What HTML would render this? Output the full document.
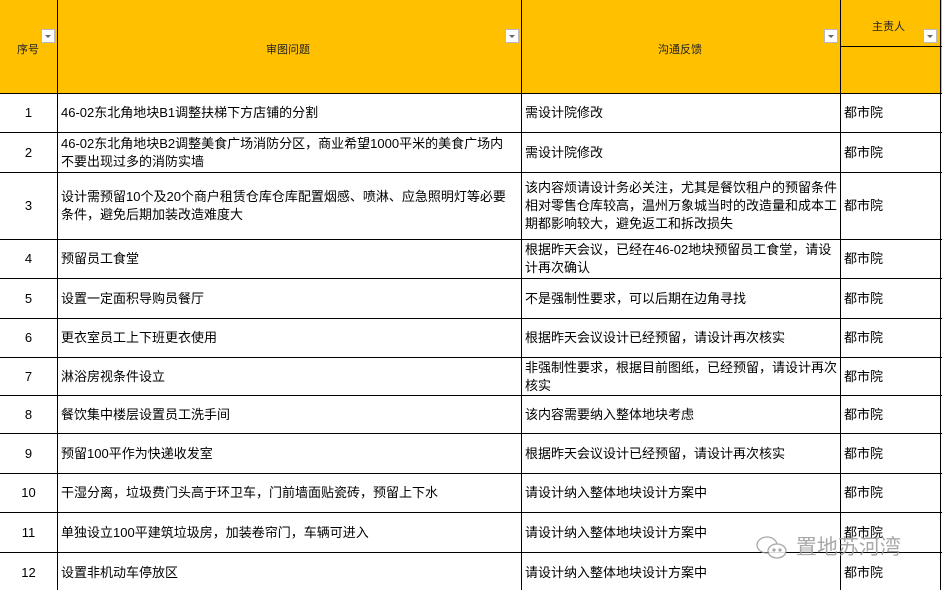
<!DOCTYPE html>
<html><head><meta charset="utf-8"><style>
body{margin:0;width:942px;height:590px;overflow:hidden;background:#fff;font-family:"Liberation Sans","Noto Sans CJK SC",sans-serif;color:#000}
.hd{position:absolute;top:0;height:93px;background:#ffc000}
.c{position:absolute;display:flex;align-items:center;font-size:13px;line-height:18px;box-sizing:border-box;padding-left:3px}
.vl{position:absolute;width:1px;background:#000;top:0;height:590px}
.hl{position:absolute;height:1px;background:#000;left:0;width:942px}
.dd{position:absolute;width:14px;height:14px;background:#fff;border:1px solid #bbb;box-sizing:border-box}
.dd:after{content:"";position:absolute;left:3px;top:5px;border-left:3px solid transparent;border-right:3px solid transparent;border-top:3px solid #666}
.h{position:absolute;font-size:11px;color:#222}
</style></head><body>
<div class="hd" style="left:0;width:942px"></div>
<div class="h" style="left:17px;top:41px">序号</div>
<div class="h" style="left:266px;top:41px">审图问题</div>
<div class="h" style="left:658px;top:41px">沟通反馈</div>
<div class="h" style="left:872px;top:18px">主责人</div>
<div class="dd" style="left:41px;top:29px"></div>
<div class="dd" style="left:505px;top:29px"></div>
<div class="dd" style="left:824px;top:29px"></div>
<div class="dd" style="left:923px;top:29px"></div>
<div class="hl" style="left:840px;width:102px;top:46px"></div>
<div class="vl" style="left:57px"></div>
<div class="vl" style="left:521px"></div>
<div class="vl" style="left:840px"></div>
<div class="vl" style="left:940px"></div>
<div class="hl" style="top:93px"></div><div class="hl" style="top:132px"></div><div class="hl" style="top:172px"></div><div class="hl" style="top:239px"></div><div class="hl" style="top:278px"></div><div class="hl" style="top:318px"></div><div class="hl" style="top:357px"></div><div class="hl" style="top:395px"></div><div class="hl" style="top:433px"></div><div class="hl" style="top:473px"></div><div class="hl" style="top:512px"></div><div class="hl" style="top:552px"></div>

<div id="rows"></div>
<script>
var R=[[93,132,"1","46-02东北角地块B1调整扶梯下方店铺的分割","需设计院修改"],
[132,172,"2","46-02东北角地块B2调整美食广场消防分区，商业希望1000平米的美食广场内不要出现过多的消防实墙","需设计院修改"],
[172,239,"3","设计需预留10个及20个商户租赁仓库仓库配置烟感、喷淋、应急照明灯等必要条件，避免后期加装改造难度大","该内容烦请设计务必关注，尤其是餐饮租户的预留条件相对零售仓库较高，温州万象城当时的改造量和成本工期都影响较大，避免返工和拆改损失"],
[239,278,"4","预留员工食堂","根据昨天会议，已经在46-02地块预留员工食堂，请设计再次确认"],
[278,318,"5","设置一定面积导购员餐厅","不是强制性要求，可以后期在边角寻找"],
[318,357,"6","更衣室员工上下班更衣使用","根据昨天会议设计已经预留，请设计再次核实"],
[357,395,"7","淋浴房视条件设立","非强制性要求，根据目前图纸，已经预留，请设计再次核实"],
[395,433,"8","餐饮集中楼层设置员工洗手间","该内容需要纳入整体地块考虑"],
[433,473,"9","预留100平作为快递收发室","根据昨天会议设计已经预留，请设计再次核实"],
[473,512,"10","干湿分离，垃圾费门头高于环卫车，门前墙面贴瓷砖，预留上下水","请设计纳入整体地块设计方案中"],
[512,552,"11","单独设立100平建筑垃圾房，加装卷帘门，车辆可进入","请设计纳入整体地块设计方案中"],
[552,592,"12","设置非机动车停放区","请设计纳入整体地块设计方案中"]];
var h="";R.forEach(function(r){var t=r[0]+1,ht=r[1]-r[0]-1;
h+='<div class="c" style="left:0;width:57px;justify-content:center;padding:0;top:'+t+'px;height:'+ht+'px">'+r[2]+'</div>';
h+='<div class="c" style="left:58px;width:463px;padding-right:14px;top:'+t+'px;height:'+ht+'px">'+r[3]+'</div>';
h+='<div class="c" style="left:522px;width:318px;top:'+t+'px;height:'+ht+'px">'+r[4]+'</div>';
h+='<div class="c" style="left:841px;width:99px;top:'+t+'px;height:'+ht+'px">都市院</div>';});
document.getElementById("rows").innerHTML=h;
</script>
<div style="position:absolute;left:754px;top:531px;font-size:21px;color:#999;opacity:.85">
<svg width="36" height="26" viewBox="0 0 34 26" style="vertical-align:middle" fill="none" stroke="#999" stroke-width="1.3"><ellipse cx="12" cy="10" rx="10" ry="8"/><ellipse cx="22" cy="16" rx="9" ry="7" fill="#fff"/><circle cx="19" cy="15" r="1" fill="#999"/><circle cx="25" cy="15" r="1" fill="#999"/></svg>
<span style="font-family:'Noto Sans CJK SC',sans-serif">置地苏河湾</span></div>
</body></html>
